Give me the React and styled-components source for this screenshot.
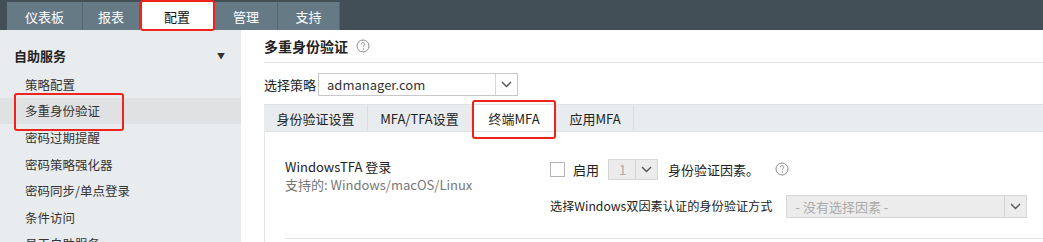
import styled, { createGlobalStyle } from "styled-components";

const GlobalStyle = createGlobalStyle`
    * { box-sizing: border-box; }
    html, body {
        margin: 0;
        padding: 0;
        background: #fff;
        font-family: "Noto Sans CJK SC", "Noto Sans", sans-serif;
        font-size: 13px;
        color: #222;
        overflow: hidden;
    }
`;

const topTabs = ["仪表板", "报表", "配置", "管理", "支持"];
const topWidths = [76, 57, 75, 63, 62];
const sideItems = ["策略配置", "多重身份验证", "密码过期提醒", "密码策略强化器", "密码同步/单点登录", "条件访问", "员工自助服务"];
const subTabs = [
    { label: "身份验证设置", w: 104 },
    { label: "MFA/TFA设置", w: 104 },
    { label: "终端MFA", w: 85, active: true },
    { label: "应用MFA", w: 77 },
];

function HelpIcon() {
    return (
        <Help viewBox="0 0 14 14">
            <circle cx="7" cy="7" r="6" fill="none" stroke="#8a8a8a" strokeWidth="1" />
            <path d="M5.2 5.4 C5.2 4.3 6 3.7 7 3.7 C8 3.7 8.8 4.3 8.8 5.2 C8.8 6.2 7.3 6.4 7.3 7.6 L7.3 8.2" fill="none" stroke="#8a8a8a" strokeWidth="1" />
            <circle cx="7.3" cy="10" r="0.7" fill="#8a8a8a" />
        </Help>
    );
}

function Chevron() {
    return (
        <svg width="11" height="7" viewBox="0 0 11 7">
            <path d="M1 1 L5.5 5.5 L10 1" fill="none" stroke="#555" strokeWidth="1.4" />
        </svg>
    );
}

export default function App() {
    return (
        <Page>
            <GlobalStyle />
            <TopBar>
                {topTabs.map((t, i) => (
                    <TopTab key={t} $active={t === "配置"} style={{ width: topWidths[i] }}>
                        {t}
                    </TopTab>
                ))}
            </TopBar>
            <Body>
                <Sidebar>
                    <SideHead>
                        <span>自助服务</span>
                        <Caret>▼</Caret>
                    </SideHead>
                    {sideItems.map(item => (
                        <SideItem key={item} $active={item === "多重身份验证"}>
                            {item}
                        </SideItem>
                    ))}
                </Sidebar>
                <Main>
                    <Heading>
                        多重身份验证 <HelpIcon />
                    </Heading>
                    <PolicyRow>
                        <span>选择策略</span>
                        <Select $width={200}>
                            <SelectText>admanager.com</SelectText>
                            <SelectArrow><Chevron /></SelectArrow>
                        </Select>
                    </PolicyRow>
                    <SubTabs>
                        {subTabs.map(t => (
                            <SubTab key={t.label} $active={t.active} style={{ width: t.w }}>
                                {t.label}
                            </SubTab>
                        ))}
                    </SubTabs>
                    <Panel>
                        <Setting>
                            <SettingInfo>
                                <SettingTitle>WindowsTFA 登录</SettingTitle>
                                <SettingSub>支持的: Windows/macOS/Linux</SettingSub>
                            </SettingInfo>
                            <SettingControls>
                                <ControlRow>
                                    <Checkbox />
                                    <Label $gap={9}>启用</Label>
                                    <Select $width={50} $disabled $height={21}>
                                        <SelectText $small>1</SelectText>
                                        <SelectArrow><Chevron /></SelectArrow>
                                    </Select>
                                    <Label $gap={16} $lead={10}>身份验证因素。</Label>
                                    <HelpIcon />
                                </ControlRow>
                                <ControlRow>
                                    <Label $gap={14} $narrow>选择Windows双因素认证的身份验证方式</Label>
                                    <Select $width={241} $disabled>
                                        <SelectText $placeholder>- 没有选择因素 -</SelectText>
                                        <SelectArrow><Chevron /></SelectArrow>
                                    </Select>
                                </ControlRow>
                            </SettingControls>
                        </Setting>
                    </Panel>
                </Main>
            </Body>
        </Page>
    );
}

const Page = styled.div`
    width: 1043px;
    height: 242px;
    overflow: hidden;
`;

const TopBar = styled.header`
    height: 30px;
    background-color: #434f57;
    display: flex;
    align-items: flex-end;
    padding-left: 7px;
`;

const TopTab = styled.div`
    position: relative;
    height: 28px;
    display: flex;
    align-items: center;
    justify-content: center;
    font-size: 13px;
    color: ${p => (p.$active ? "#111" : "#fff")};
    background-color: ${p => (p.$active ? "#fff" : "#667a86")};
    border-right: 1px solid #56656e;

    &::after {
        content: "";
        display: ${p => (p.$active ? "block" : "none")};
        position: absolute;
        left: 0;
        right: -1px;
        top: -2px;
        bottom: -1px;
        border: 2px solid #f0231b;
        border-radius: 3px;
    }
`;

const Body = styled.div`
    display: flex;
    height: 212px;
`;

const Sidebar = styled.nav`
    width: 241px;
    flex-shrink: 0;
    background-color: #e9ecee;
    padding-top: 12px;
`;

const SideHead = styled.div`
    height: 26px;
    margin-bottom: 3px;
    display: flex;
    align-items: center;
    justify-content: space-between;
    padding: 0 16px 0 14px;
    font-weight: bold;
    font-size: 13px;
    color: #222;
`;

const Caret = styled.span`
    font-size: 8px;
    color: #333;
`;

const SideItem = styled.div`
    position: relative;
    height: 26.6px;
    display: flex;
    align-items: center;
    padding-left: 25px;
    font-size: 12.5px;
    color: #333;
    background-color: ${p => (p.$active ? "#dfe1e3" : "transparent")};

    &::after {
        content: "";
        display: ${p => (p.$active ? "block" : "none")};
        position: absolute;
        left: 14px;
        width: 106px;
        top: -5px;
        bottom: -7px;
        border: 2px solid #f0231b;
        border-radius: 3px;
    }
`;

const Main = styled.main`
    flex: 1;
    padding-left: 23px;
    display: flex;
    flex-direction: column;
`;

const Heading = styled.h2`
    margin: 0;
    height: 33px;
    display: flex;
    align-items: center;
    gap: 8px;
    font-size: 14px;
    font-weight: bold;
    color: #222;
    border-bottom: 1px solid #e4e4e4;
`;

const Help = styled.svg`
    width: 14px;
    height: 14px;
    flex-shrink: 0;
`;

const PolicyRow = styled.div`
    display: flex;
    align-items: center;
    gap: 2px;
    margin-top: 10px;
    font-size: 13px;
    color: #222;
`;

const Select = styled.div`
    width: ${p => p.$width}px;
    height: ${p => p.$height || 23}px;
    flex-shrink: 0;
    display: flex;
    border: 1px solid ${p => (p.$disabled ? "#d6d6d6" : "#c8c8c8")};
    background-color: ${p => (p.$disabled ? "#ececec" : "#fff")};
`;

const SelectText = styled.div`
    flex: 1;
    display: flex;
    align-items: center;
    padding-left: ${p => (p.$small ? 10 : 8)}px;
    font-size: 13px;
    color: ${p => (p.$placeholder || p.$small ? "#aaa" : "#333")};
`;

const SelectArrow = styled.div`
    width: 22px;
    display: flex;
    align-items: center;
    justify-content: center;
    border-left: 1px solid #d6d6d6;
`;

const SubTabs = styled.div`
    margin-top: 8px;
    height: 28px;
    display: flex;
    background-color: #e9ecee;
    border-top: 1px solid #e0e3e5;
    border-bottom: 1px solid #e0e3e5;
`;

const SubTab = styled.div`
    position: relative;
    display: flex;
    align-items: center;
    justify-content: center;
    font-size: 13px;
    color: #222;
    background-color: ${p => (p.$active ? "#fff" : "transparent")};
    border-right: 1px solid #dcdfe1;

    &::after {
        content: "";
        display: ${p => (p.$active ? "block" : "none")};
        position: absolute;
        left: 0;
        right: 0;
        top: -5px;
        bottom: -8px;
        border: 2px solid #f0231b;
        border-radius: 3px;
    }
`;

const Panel = styled.section`
    flex: 1;
    border-left: 1px solid #e4e4e4;
    padding: 0 0 0 20px;
`;

const Setting = styled.div`
    display: flex;
    padding-top: 24px;
    height: 107px;
    border-bottom: 1px solid #e4e4e4;
`;

const SettingInfo = styled.div`
    width: 265px;
    padding-top: 2px;
`;

const SettingTitle = styled.div`
    font-size: 13px;
    color: #222;
    line-height: 18px;
`;

const SettingSub = styled.div`
    font-size: 13px;
    color: #777;
    line-height: 18px;
`;

const SettingControls = styled.div`
    display: flex;
    flex-direction: column;
    gap: 15px;
    padding-top: 2px;
`;

const ControlRow = styled.div`
    display: flex;
    align-items: center;
    height: 22px;
`;

const Checkbox = styled.span`
    width: 15px;
    height: 15px;
    border: 1px solid #b5b5b5;
    background: #fff;
    margin-right: 8px;
`;

const Label = styled.span`
    font-size: ${p => (p.$narrow ? 12.2 : 13)}px;
    color: #222;
    margin-left: ${p => p.$lead || 0}px;
    margin-right: ${p => p.$gap}px;
    white-space: nowrap;
`;
